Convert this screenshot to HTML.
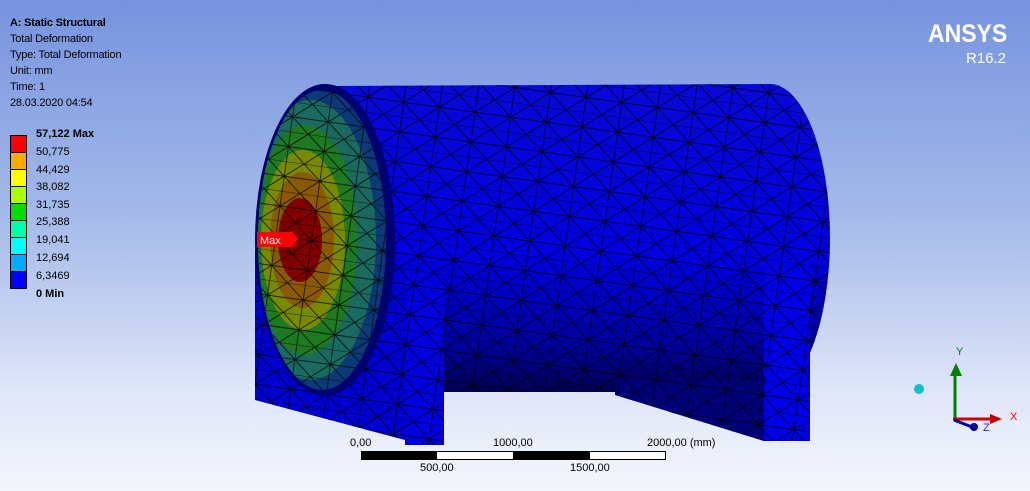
<!DOCTYPE html>
<html><head><meta charset="utf-8"><style>
html,body{margin:0;padding:0;width:1030px;height:491px;overflow:hidden}
body{background:linear-gradient(#7693de 0%,#a6bbea 45%,#dfe6f8 80%,#f4f6fc 100%);font-family:"Liberation Sans",sans-serif;position:relative}
.t{position:absolute;left:10px;font-size:11px;color:#000;line-height:16px;letter-spacing:-0.2px}
.l{position:absolute;left:36px;font-size:11px;color:#000}
.s{position:absolute;font-size:11px;color:#000}
</style></head><body>
<div class="t" style="top:15px;font-weight:bold">A: Static Structural</div>
<div class="t" style="top:31px">Total Deformation</div>
<div class="t" style="top:47px">Type: Total Deformation</div>
<div class="t" style="top:63px">Unit: mm</div>
<div class="t" style="top:79px">Time: 1</div>
<div class="t" style="top:95px">28.03.2020 04:54</div>
<div style="position:absolute;left:10px;top:135px;width:15px;border:1px solid #000;">
<div style="height:16px;background:#ff0000;border-bottom:1px solid #000"></div>
<div style="height:16px;background:#ffaa00;border-bottom:1px solid #000"></div>
<div style="height:16px;background:#ffff00;border-bottom:1px solid #000"></div>
<div style="height:16px;background:#aaff00;border-bottom:1px solid #000"></div>
<div style="height:16px;background:#00dd00;border-bottom:1px solid #000"></div>
<div style="height:16px;background:#00ffaa;border-bottom:1px solid #000"></div>
<div style="height:16px;background:#00ffff;border-bottom:1px solid #000"></div>
<div style="height:16px;background:#00aaff;border-bottom:1px solid #000"></div>
<div style="height:16px;background:#0000ff"></div>
</div>
<div class="l" style="top:128px;font-weight:bold">57,122 Max</div>
<div class="l" style="top:146px">50,775</div>
<div class="l" style="top:164px">44,429</div>
<div class="l" style="top:181px">38,082</div>
<div class="l" style="top:199px">31,735</div>
<div class="l" style="top:216px">25,388</div>
<div class="l" style="top:234px">19,041</div>
<div class="l" style="top:252px">12,694</div>
<div class="l" style="top:270px">6,3469</div>
<div class="l" style="top:288px;font-weight:bold">0 Min</div>
<div style="position:absolute;left:928px;top:20px;font-size:25px;font-weight:bold;color:#fff;transform:scaleX(0.92);transform-origin:left top">ANSYS</div>
<div style="position:absolute;left:966px;top:50px;font-size:15px;color:#fff">R16.2</div>

<svg width="1030" height="491" style="position:absolute;left:0;top:0">
<defs>
<pattern id="m" width="36" height="30" patternUnits="userSpaceOnUse" patternTransform="rotate(8)">
<path d="M0 0H36M0 15H36M0 0L18 15L36 0M0 30L18 15L36 30M18 0V30" stroke="#000" stroke-width="0.7" fill="none"/>
</pattern>
<linearGradient id="bg" x1="0" y1="0" x2="0" y2="1">
<stop offset="0" stop-color="#0808d8"/><stop offset="0.55" stop-color="#0000e0"/><stop offset="0.85" stop-color="#00009a"/><stop offset="1" stop-color="#000050"/>
</linearGradient>
<clipPath id="fc"><ellipse cx="322" cy="240" rx="64" ry="150"/></clipPath>
</defs>
<path d="M330 86 L770 84 A60 154 0 0 1 770 392 L330 392 Z" fill="url(#bg)"/>
<path d="M330 86 L770 84 A60 154 0 0 1 770 392 L330 392 Z" fill="url(#m)"/>
<path d="M615 380 L764 380 L764 441 L615 395 Z" fill="#00007a"/>
<path d="M615 380 L764 380 L764 441 L615 395 Z" fill="url(#m)"/>
<rect x="764" y="260" width="46" height="181" fill="#0000e8"/>
<rect x="764" y="260" width="46" height="181" fill="url(#m)"/>
<path d="M255 250 L405 270 L405 440 L255 400 Z" fill="#0000d0"/>
<path d="M255 250 L405 270 L405 440 L255 400 Z" fill="url(#m)"/>
<rect x="405" y="270" width="39" height="175" fill="#0000e0"/>
<rect x="405" y="270" width="39" height="175" fill="url(#m)"/>
<ellipse cx="325" cy="240" rx="70" ry="156" fill="#000070"/>
<ellipse cx="322" cy="240" rx="64" ry="150" fill="#0c3a78"/>
<g clip-path="url(#fc)">
<ellipse cx="310" cy="240" rx="66" ry="140" fill="#1a6a60"/>
<ellipse cx="305" cy="240" rx="52" ry="115" fill="#1e7a20"/>
<ellipse cx="303" cy="240" rx="42" ry="90" fill="#7a8a00"/>
<ellipse cx="302" cy="240" rx="32" ry="68" fill="#8a5a00"/>
<ellipse cx="300" cy="240" rx="22" ry="42" fill="#800000"/>
<rect x="250" y="80" width="150" height="330" fill="url(#m)"/>
</g>
<path d="M257 232 H292 L298 239 L292 247 H257 Z" fill="#ff0000"/>
<text x="260" y="244" font-family="Liberation Sans" font-size="11" fill="#fff">Max</text>
<rect x="361.5" y="451.5" width="304" height="8" fill="#fff" stroke="#000"/>
<rect x="361" y="451" width="76" height="9" fill="#000"/>
<rect x="513" y="451" width="77" height="9" fill="#000"/>
<circle cx="919" cy="389" r="5" fill="#10c0c8"/>
<line x1="955" y1="418" x2="955" y2="372" stroke="#008000" stroke-width="3"/>
<path d="M950 376 L956 363 L962 376 Z" fill="#008000"/>
<line x1="953" y1="419" x2="992" y2="419" stroke="#d00000" stroke-width="3"/>
<path d="M990 414 L1002 419 L990 424 Z" fill="#c00000"/>
<line x1="954" y1="420" x2="972" y2="427" stroke="#0000a0" stroke-width="3"/>
<circle cx="974" cy="427" r="4" fill="#0000a0"/>
<text x="956" y="355" font-family="Liberation Sans" font-size="11" fill="#008000">Y</text>
<text x="1010" y="420" font-family="Liberation Sans" font-size="11" fill="#ff0000">X</text>
<text x="983" y="431" font-family="Liberation Sans" font-size="11" fill="#2020ff">Z</text>
</svg>
<div class="s" style="left:350px;top:437px">0,00</div>
<div class="s" style="left:493px;top:437px">1000,00</div>
<div class="s" style="left:647px;top:437px">2000,00 (mm)</div>
<div class="s" style="left:420px;top:462px">500,00</div>
<div class="s" style="left:570px;top:462px">1500,00</div>
</body></html>
